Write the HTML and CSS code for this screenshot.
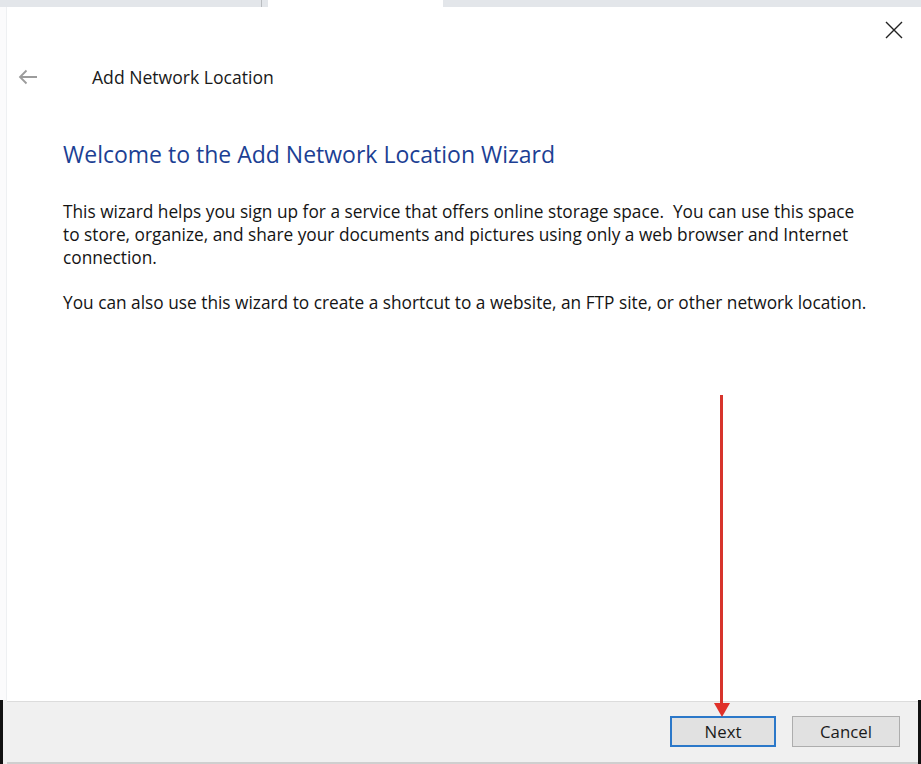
FILE: index.html
```html
<!DOCTYPE html>
<html>
<head>
<meta charset="utf-8">
<link rel="stylesheet" href="styles.css">
</head>
<body>
<div class="screen">
  <div class="topstrip">
    <div class="seg seg-a"></div>
    <div class="seg seg-b"></div>
    <div class="seg seg-c"></div>
  </div>
  <div class="main">
    <div class="leftstrip">
      <div class="ls-upper"></div>
      <div class="ls-lower"></div>
    </div>
    <div class="dialog">
      <div class="content">
        <div class="closerow">
          <svg class="close" width="18" height="18" viewBox="0 0 18 18"><path d="M1 1 L17 17 M17 1 L1 17" stroke="#222" stroke-width="1.4" fill="none"/></svg>
        </div>
        <div class="navrow">
          <svg class="back" width="20" height="16" viewBox="0 0 20 16"><path d="M19 8 H2 M8.5 1.5 L2 8 L8.5 14.5" stroke="#9c9c9c" stroke-width="1.8" fill="none"/></svg>
          <span class="title">Add Network Location</span>
        </div>
        <div class="body">
          <h1 class="heading">Welcome to the Add Network Location Wizard</h1>
          <p class="para">This wizard helps you sign up for a service that offers online storage space.&nbsp; You can use this space to store, organize, and share your documents and pictures using only a web browser and Internet connection.</p>
          <p class="para">You can also use this wizard to create a shortcut to a website, an FTP site, or other network location.</p>
        </div>
      </div>
      <div class="footer">
        <button class="btn btn-primary">Next</button>
        <button class="btn">Cancel</button>
      </div>
      <div class="annot">
        <div class="annot-line"></div>
        <div class="annot-head"></div>
      </div>
    </div>
    <div class="rightstrip">
      <div class="rs-upper"></div>
      <div class="rs-lower"></div>
    </div>
  </div>
</div>
</body>
</html>
```
FILE: styles.css
```css
html, body {
  margin: 0;
  padding: 0;
  background: #ffffff;
}
.screen {
  width: 921px;
  height: 764px;
  overflow: hidden;
  display: flex;
  flex-direction: column;
  font-family: "Open Sans", "Noto Sans", "Liberation Sans", sans-serif;
}
.topstrip {
  height: 7px;
  display: flex;
  flex: none;
}
.seg { height: 7px; }
.seg-a {
  width: 268px;
  background: #e3e6ea;
  box-shadow: inset -6px 0 0 #e3e6ea, inset -7px 0 0 #b9bcc0;
}
.seg-b { width: 175px; background: #ffffff; }
.seg-c { flex: 1; background: #e3e6ea; }
.main {
  flex: 1;
  display: flex;
  min-height: 0;
}
.leftstrip {
  width: 7px;
  flex: none;
  display: flex;
  flex-direction: column;
  background: #fbfbfc;
}
.ls-upper { flex: 1; border-right: 1px solid #eef0f2; }
.ls-lower { height: 64px; background: #f0f0f0; border-left: 3px solid #111; }
.rightstrip {
  width: 3px;
  flex: none;
  display: flex;
  flex-direction: column;
}
.rs-upper { flex: 1; background: #ffffff; }
.rs-lower { height: 64px; background: #111; }
.dialog {
  flex: 1;
  display: flex;
  flex-direction: column;
  position: relative;
  background: #ffffff;
}
.content {
  flex: 1;
  display: flex;
  flex-direction: column;
}
.closerow {
  display: flex;
  justify-content: flex-end;
  padding: 14px 15px 0 0;
  height: 26px;
}
.close { display: block; margin-top: 0; }
.navrow {
  display: flex;
  align-items: center;
  height: 30px;
  margin-top: 15px;
}
.back { margin-left: 11px; }
.title {
  margin-left: 54px;
  font-size: 17.6px;
  color: #1a1a1a;
}
.body {
  padding: 0 44px 0 56px;
  margin-top: 47px;
}
.heading {
  margin: 0 0 31px 0;
  font-weight: normal;
  font-size: 23px;
  color: #1c3f94;
  line-height: 30px;
}
.para {
  margin: 0 0 22px 0;
  font-size: 17.3px;
  line-height: 23px;
  color: #141414;
}
.footer {
  height: 63px;
  flex: none;
  background: #f0f0f0;
  border-top: 1px solid #dcdcdc;
  display: flex;
  justify-content: flex-end;
  align-items: center;
  gap: 16px;
  padding-right: 18px;
  box-sizing: border-box;
  border-bottom: 2px solid #cfcfcf;
}
.btn {
  width: 108px;
  height: 31px;
  background: #e1e1e1;
  border: 1px solid #adadad;
  font-family: "Open Sans", "Noto Sans", "Liberation Sans", sans-serif;
  font-size: 16.8px;
  color: #1a1a1a;
  padding: 0;
  margin-top: -2px;
}
.btn-primary {
  width: 106px;
  border: 2px solid #2b78c9;
}
.annot {
  position: absolute;
  left: 707px;
  top: 388px;
  width: 16px;
  height: 332px;
}
.annot-line {
  position: absolute;
  left: 6px;
  top: 0;
  width: 3px;
  height: 318px;
  background: #d7342c;
}
.annot-head {
  position: absolute;
  left: 0;
  top: 308px;
  width: 0;
  height: 0;
  border-left: 8px solid transparent;
  border-right: 8px solid transparent;
  border-top: 14px solid #e0312a;
}
```
